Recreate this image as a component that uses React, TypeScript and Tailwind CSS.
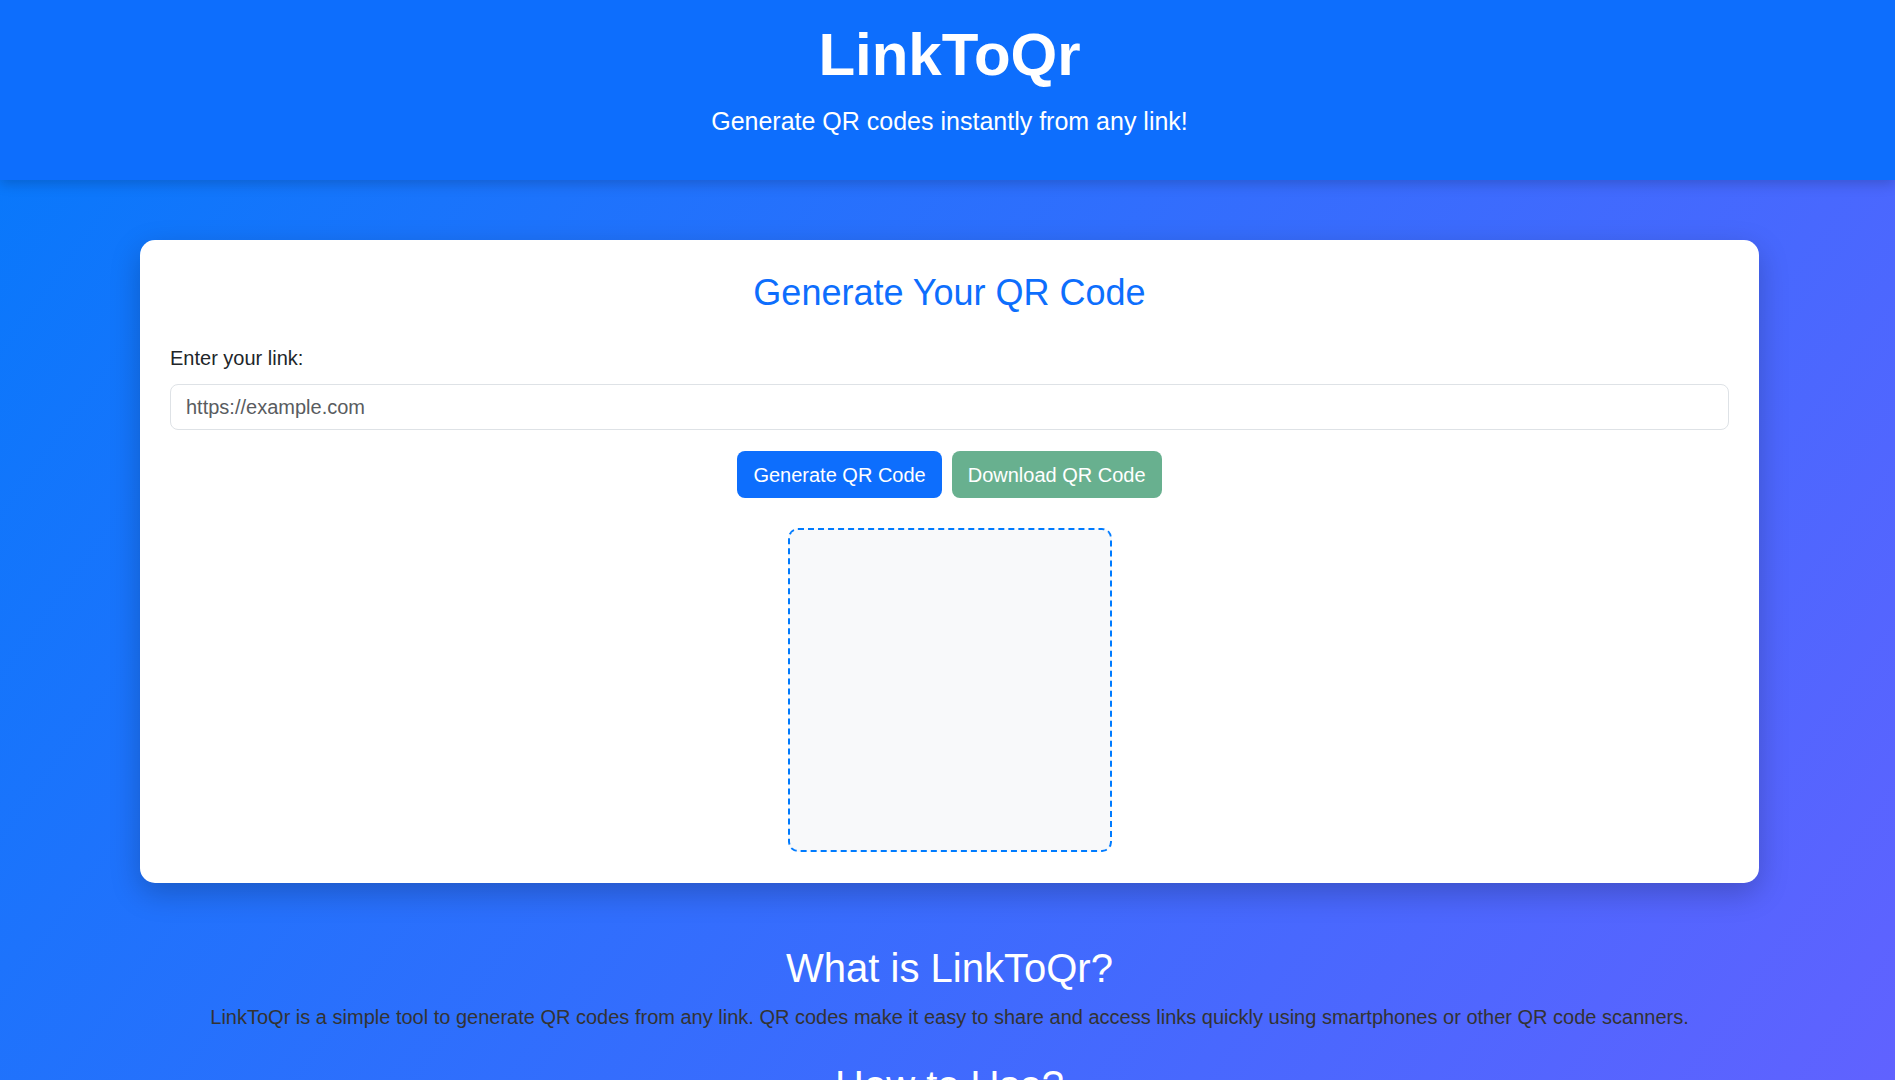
export default function App() {
  return (
    <div className="min-h-screen bg-[linear-gradient(126deg,#0579fb,#6062ff)] bg-fixed font-['Liberation_Sans',Arial,sans-serif]">
      {/* Header */}
      <header className="relative z-10 h-[180px] bg-[#0d6efd] pt-[19px] pl-[4px] text-center text-white shadow-[0_4px_12px_rgba(0,0,0,0.18)]">
        <h1 className="text-[60px] font-bold leading-[72px]">LinkToQr</h1>
        <p className="mt-[12px] text-[25px] leading-[36px]">Generate QR codes instantly from any link!</p>
      </header>

      <main className="pt-[60px] pb-16">
        {/* Generator card */}
        <section className="ml-[140px] mr-[136px] rounded-[15px] bg-white px-[30px] pt-[32px] pb-[31px] shadow-[0_10px_30px_rgba(0,0,0,0.22)]">
          <h2 className="text-center text-[36px] leading-[42px] text-[#0d6efd]">Generate Your QR Code</h2>

          <label htmlFor="link" className="mt-[29px] block text-[20px] leading-[30px] text-[#212529]">
            Enter your link:
          </label>
          <input
            id="link"
            type="text"
            placeholder="https://example.com"
            className="mt-[11px] block h-[46px] w-full rounded-[8px] border border-[#dee2e6] bg-white px-[15px] text-[20px] text-[#212529] outline-none placeholder:text-[#595c5f]"
          />

          <div className="mt-[21px] flex justify-center gap-[10px]">
            <button className="h-[47px] rounded-[8px] bg-[#0d6efd] px-[16px] text-[20px] leading-[30px] text-white">
              Generate QR Code
            </button>
            <button disabled className="h-[47px] rounded-[8px] bg-[#198754] px-[16px] text-[20px] leading-[30px] text-white opacity-65">
              Download QR Code
            </button>
          </div>

          <div className="mt-[30px] flex justify-center">
            <div className="h-[324px] w-[324px] rounded-[10px] border-2 border-dashed border-[#007bff] bg-[#f8f9fa]"></div>
          </div>
        </section>

        {/* About */}
        <section className="mt-[61px] pl-[4px] text-center">
          <h2 className="text-[40px] leading-[48px] text-white">What is LinkToQr?</h2>
          <p className="mt-[10px] text-[20px] leading-[30px] text-[#333]">
            LinkToQr is a simple tool to generate QR codes from any link. QR codes make it easy to share and access links quickly using smartphones or other QR code scanners.
          </p>
        </section>

        <section className="mt-[29px] pl-[4px] text-center">
          <h2 className="text-[40px] leading-[48px] text-white">How to Use?</h2>
          <ol className="mt-[10px] space-y-1 text-[20px] leading-[30px] text-[#333]">
            <li>1. Paste your link in the input field above.</li>
            <li>2. Click "Generate QR Code" to create your QR code.</li>
            <li>3. Click "Download QR Code" to save it as an image.</li>
          </ol>
        </section>
      </main>
    </div>
  );
}
